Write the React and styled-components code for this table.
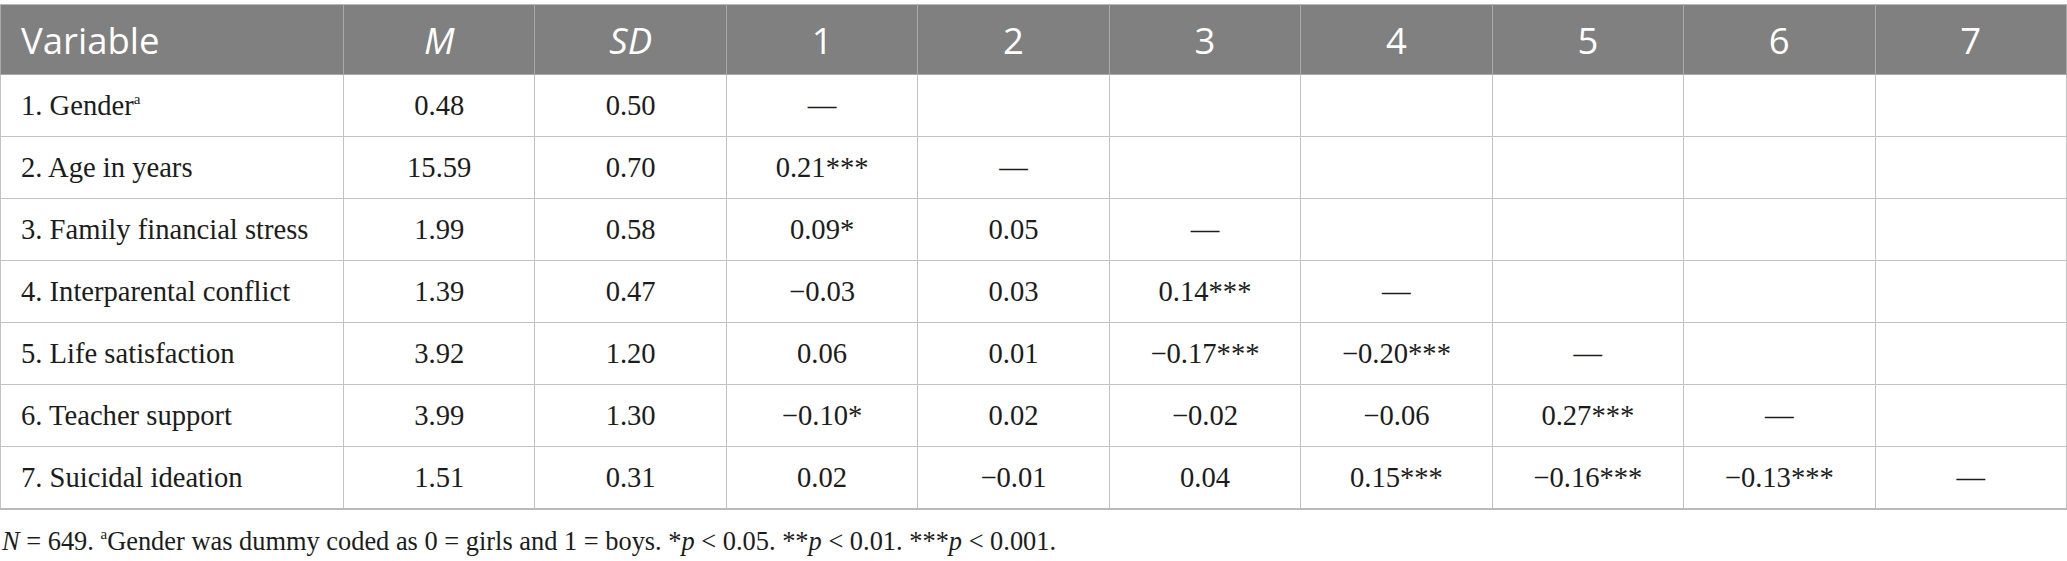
import styled, { createGlobalStyle } from 'styled-components';

const GlobalStyle = createGlobalStyle`
	html, body {
		margin: 0;
		padding: 0;
		background: #fff;
	}
`;

const Page = styled.div`
	padding-top: 4px;
	width: 2067px;
`;

const Table = styled.table`
	width: 2067px;
	border-collapse: collapse;
	table-layout: fixed;
	border: 1px solid #b9b9b9;
	border-bottom-width: 2px;
`;

const HeadCell = styled.th`
	height: 69px;
	padding: 0 20px;
	background-color: #7f807f;
	color: #fff;
	font-family: 'Open Sans', sans-serif;
	font-weight: 400;
	font-size: 36.5px;
	font-style: ${({ $italic }) => ($italic ? 'italic' : 'normal')};
	text-align: ${({ $left }) => ($left ? 'left' : 'center')};
	border: 1px solid #a9aaa9;
	border-top-color: #b9b9b9;
`;

const Cell = styled.td`
	height: 61px;
	padding: 0 20px;
	font-family: 'Liberation Serif', 'Times New Roman', serif;
	font-size: 28.6px;
	color: #1c1c1c;
	text-align: ${({ $left }) => ($left ? 'left' : 'center')};
	border: 1px solid #c3c3c3;
	white-space: nowrap;
`;

const Sup = styled.sup`
	font-size: 15px;
	vertical-align: 11px;
	line-height: 0;
`;

const Note = styled.p`
	margin: 16px 0 0;
	padding-left: 2px;
	font-family: 'Liberation Serif', 'Times New Roman', serif;
	font-size: 26.4px;
	color: #1c1c1c;
`;

const Em = styled.i``;

const rows = [
	['1. Gender', '0.48', '0.50', ['—'], true],
	['2. Age in years', '15.59', '0.70', ['0.21***', '—']],
	['3. Family financial stress', '1.99', '0.58', ['0.09*', '0.05', '—']],
	['4. Interparental conflict', '1.39', '0.47', ['−0.03', '0.03', '0.14***', '—']],
	['5. Life satisfaction', '3.92', '1.20', ['0.06', '0.01', '−0.17***', '−0.20***', '—']],
	['6. Teacher support', '3.99', '1.30', ['−0.10*', '0.02', '−0.02', '−0.06', '0.27***', '—']],
	['7. Suicidal ideation', '1.51', '0.31', ['0.02', '−0.01', '0.04', '0.15***', '−0.16***', '−0.13***', '—']],
];

const App = () => {
	return (
		<Page>
			<GlobalStyle />
			<Table>
				<colgroup>
					<col style={{ width: 343 }} />
					{Array.from({ length: 9 }).map((_, i) => (
						<col key={i} />
					))}
				</colgroup>
				<thead>
					<tr>
						<HeadCell $left>Variable</HeadCell>
						<HeadCell $italic>M</HeadCell>
						<HeadCell $italic>SD</HeadCell>
						{[1, 2, 3, 4, 5, 6, 7].map(n => (
							<HeadCell key={n}>{n}</HeadCell>
						))}
					</tr>
				</thead>
				<tbody>
					{rows.map(([name, m, sd, vals, sup]) => (
						<tr key={name}>
							<Cell $left>
								{name}
								{sup && <Sup>a</Sup>}
							</Cell>
							<Cell>{m}</Cell>
							<Cell>{sd}</Cell>
							{Array.from({ length: 7 }).map((_, i) => (
								<Cell key={i}>{vals[i] || ''}</Cell>
							))}
						</tr>
					))}
				</tbody>
			</Table>
			<Note>
				<Em>N</Em> = 649. <Sup>a</Sup>Gender was dummy coded as 0 = girls and 1 = boys. *<Em>p</Em> &lt; 0.05. **<Em>p</Em> &lt; 0.01. ***<Em>p</Em> &lt; 0.001.
			</Note>
		</Page>
	);
};

export default App;
